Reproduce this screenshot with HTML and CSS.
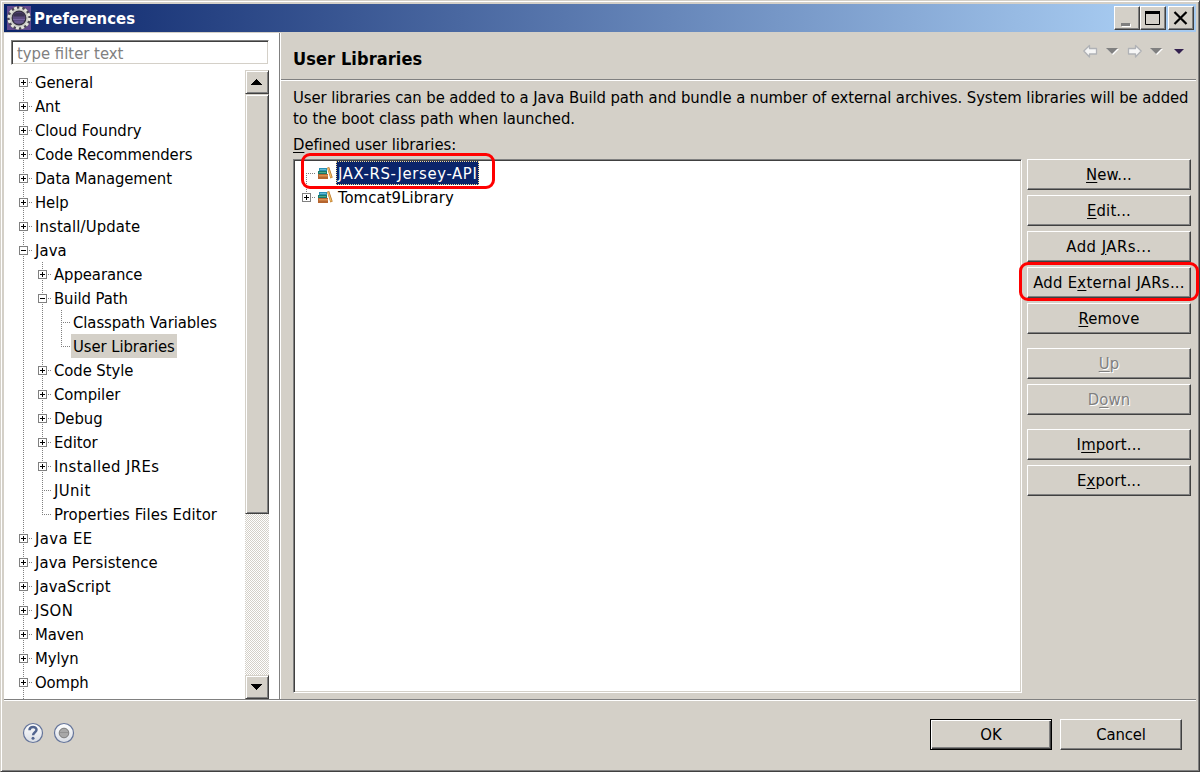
FILE: index.html
```html
<!DOCTYPE html>
<html lang="en">
<head>
<meta charset="utf-8">
<title>Preferences</title>
<link rel="stylesheet" href="styles.css">
</head>
<body>
<svg width="0" height="0" class="defs">
  <symbol id="books" viewBox="0 0 16 16">
    <path d="M2 3h8v3H2z" fill="#2a8fb5"/><path d="M3 4h6v1H3z" fill="#62bcd2"/>
    <path d="M1 6h9v3H1z" fill="#17796a"/><path d="M2 7h7v1H2z" fill="#4fa88a"/>
    <path d="M1 9h10v5H1z" fill="#b5652f"/><path d="M2 10h9v1.500H2z" fill="#dc9350"/>
    <path d="M10 2.700l2.200-.8 3.500 10.600-2.300.9z" fill="#b9772c"/><path d="M11 3l3.300 9.500" stroke="#f0bd65" stroke-width="1.200" fill="none"/>
  </symbol>
</svg>
<div class="window">
  <header class="titlebar">
    <svg class="app" width="24" height="24" viewBox="0 0 24 24">
      <rect width="24" height="24" fill="#62498f"/>
      <circle cx="12" cy="12" r="10" fill="none" stroke="#4a4655" stroke-width="3.5"/>
      <circle cx="12" cy="12" r="8.2" fill="#4a3b6c" stroke="#c9c9c4" stroke-width="2.600"/>
      <circle cx="12" cy="12" r="10.2" fill="none" stroke="#e4e4dc" stroke-width="2.8" stroke-dasharray="3 2.34"/>
      <circle cx="12" cy="12" r="6.8" fill="#5b4a80" stroke="#343040" stroke-width="1.200"/>
      <path d="M6.500 8.500q5.500-4 11 0v2h-11z" fill="#3b3252"/><path d="M6 13.500h12M7.500 16h9" stroke="#7564a0"/>
    </svg>
    <h1>Preferences</h1>
    <div class="winbtns">
      <span class="raised wb"><svg width="20" height="20"><path d="M5 16h9v3H5z" fill="#fff"/><path d="M4 15h9v3H4z" fill="#808080"/></svg></span>
      <span class="raised wb"><svg width="20" height="20"><path d="M3 4h14v13H3z" fill="none" stroke="#000" stroke-width="1" transform="translate(-.5 -.5)"/><path d="M2 3h15v3H2z"/></svg></span>
      <span class="raised wb close"><svg width="20" height="20"><path d="M3.500 4l12 12M15.500 4l-12 12" stroke="#000" stroke-width="2.2"/></svg></span>
    </div>
  </header>
  <main class="body">
    <nav class="side">
      <div class="filter">type filter text</div>
      <div class="treewrap">
        <ul class="tree">
          <li><i class="g first"><b class="plus"></b></i><span>General</span></li>
          <li><i class="g"><b class="plus"></b></i><span>Ant</span></li>
          <li><i class="g"><b class="plus"></b></i><span>Cloud Foundry</span></li>
          <li><i class="g"><b class="plus"></b></i><span>Code Recommenders</span></li>
          <li><i class="g"><b class="plus"></b></i><span>Data Management</span></li>
          <li><i class="g"><b class="plus"></b></i><span>Help</span></li>
          <li><i class="g"><b class="plus"></b></i><span class="wide">Install/Update</span></li>
          <li><i class="g"><b></b></i><span class="wide">Java</span></li>
          <li><i class="g v"></i><i class="g"><b class="plus"></b></i><span>Appearance</span></li>
          <li><i class="g v"></i><i class="g"><b></b></i><span>Build Path</span></li>
          <li><i class="g v"></i><i class="g v"></i><i class="g"></i><span>Classpath Variables</span></li>
          <li><i class="g v"></i><i class="g v"></i><i class="g last"></i><span class="sel">User Libraries</span></li>
          <li><i class="g v"></i><i class="g"><b class="plus"></b></i><span>Code Style</span></li>
          <li><i class="g v"></i><i class="g"><b class="plus"></b></i><span>Compiler</span></li>
          <li><i class="g v"></i><i class="g"><b class="plus"></b></i><span>Debug</span></li>
          <li><i class="g v"></i><i class="g"><b class="plus"></b></i><span>Editor</span></li>
          <li><i class="g v"></i><i class="g"><b class="plus"></b></i><span class="wider">Installed JREs</span></li>
          <li><i class="g v"></i><i class="g"></i><span class="wider">JUnit</span></li>
          <li><i class="g v"></i><i class="g last"></i><span class="prop">Properties Files Editor</span></li>
          <li><i class="g"><b class="plus"></b></i><span class="wider">Java EE</span></li>
          <li><i class="g"><b class="plus"></b></i><span class="wide">Java Persistence</span></li>
          <li><i class="g"><b class="plus"></b></i><span class="wide">JavaScript</span></li>
          <li><i class="g"><b class="plus"></b></i><span class="wider">JSON</span></li>
          <li><i class="g"><b class="plus"></b></i><span>Maven</span></li>
          <li><i class="g"><b class="plus"></b></i><span>Mylyn</span></li>
          <li><i class="g"><b class="plus"></b></i><span>Oomph</span></li>
          <li><i class="g v"></i></li>
        </ul>
        <div class="scroll">
          <span class="raised sb"><svg width="11" height="6"><path d="M5 0h1v1h1v1h1v1h1v1h1v1h1v1H0V5h1V4h1V3h1V2h1V1h1z"/></svg></span>
          <span class="raised thumb"></span>
          <span class="track"></span>
          <span class="raised sb"><svg width="11" height="6"><path d="M0 0h11v1h-1v1H9v1H8v1H7v1H6v1H5V5H4V4H3V3H2V2H1V1H0z"/></svg></span>
        </div>
      </div>
    </nav>
    <section class="page">
      <div class="head">
        <h2>User Libraries</h2>
        <svg width="104" height="16" class="nav">
          <path d="M.8 8l5.700-5.500v3h7v5.500h-7v3z" fill="#f6f6f6" stroke="#b0b2b6" stroke-width="1.300" stroke-linejoin="round"/>
          <path d="M24 6h12l-6 6z" fill="#fff"/><path d="M23 5h12l-6 6z" fill="#808080"/>
          <path d="M58.200 8l-5.700-5.500v3h-7v5.500h7v3z" fill="#f6f6f6" stroke="#b0b2b6" stroke-width="1.300" stroke-linejoin="round"/>
          <path d="M68 6h12l-6 6z" fill="#fff"/><path d="M67 5h12l-6 6z" fill="#808080"/>
          <path d="M91 6h10l-5 5z" fill="#33204f"/>
        </svg>
      </div>
      <div class="content">
        <p>User libraries can be added to a Java Build path and bundle a number of external archives. System libraries will be added<br>to the boot class path when launched.</p>
        <div class="lbl"><u>D</u>efined user libraries:</div>
        <div class="cols">
          <div class="list">
            <ul class="tree">
              <li><i class="g first"></i><svg class="bk" width="16" height="16"><use href="#books"/></svg><span class="active">JAX-RS-Jersey-API</span></li>
              <li><i class="g last"><b class="plus"></b></i><svg class="bk" width="16" height="16"><use href="#books"/></svg><span class="wide">Tomcat9Library</span></li>
            </ul>
            <div class="mark m1"></div>
          </div>
          <div class="btns">
            <button><u>N</u>ew...</button>
            <button><u>E</u>dit...</button>
            <button class="jar">Add <u>J</u>ARs...</button>
            <div class="marked"><button class="ext">Add E<u>x</u>ternal JARs...</button><div class="mark m2"></div></div>
            <button><u>R</u>emove</button>
            <button class="off sp"><u>U</u>p</button>
            <button class="off">D<u>o</u>wn</button>
            <button class="sp">I<u>m</u>port...</button>
            <button>E<u>x</u>port...</button>
          </div>
        </div>
      </div>
    </section>
  </main>
  <footer>
    <svg width="54" height="24" class="tools">
      <defs><linearGradient id="sh" x2="0" y2="1"><stop offset="0" stop-color="#fff"/><stop offset="1" stop-color="#d9dde4"/></linearGradient></defs>
      <circle cx="11" cy="12" r="9.500" fill="url(#sh)" stroke="#64749a" stroke-width="1.200"/>
      <path d="M7.500 9.300c0-4.500 7.200-4.300 7-.3-.1 2.200-3.400 2.300-3.400 5.200" fill="none" stroke="#52658f" stroke-width="2.500"/><circle cx="11" cy="17.300" r="1.500" fill="#52658f"/>
      <circle cx="42" cy="12" r="9.500" fill="url(#sh)" stroke="#64749a" stroke-width="1.200"/>
      <circle cx="42" cy="12" r="4.800" fill="#a8a8a8" stroke="#7c7c7c"/><path d="M38 11.500h8" stroke="#929292"/>
    </svg>
    <div class="actions"><button class="ok">OK</button><button class="cancel">Cancel</button></div>
  </footer>
</div>
</body>
</html>
```
FILE: styles.css
```css
* { box-sizing: border-box; }
body { margin: 0; background: #d4d0c8; font: 16.5px/24px "DejaVu Sans Condensed", "DejaVu Sans", sans-serif; font-stretch: condensed; color: #000; letter-spacing: -0.07px; overflow: hidden; }
.defs { position: absolute; }
ul, p, h1, h2 { margin: 0; padding: 0; }
u { text-decoration-thickness: 1px; text-underline-offset: 2px; }
.window { width: 1200px; height: 772px; display: flex; flex-direction: column; padding: 3px; border: 1px solid; border-color: #d4d0c8 #404040 #404040 #d4d0c8; box-shadow: inset 1px 1px #fff, inset -1px -1px #808080; }
.titlebar { height: 28px; width: 1192px; flex: none; display: flex; align-items: center; padding: 0 2px 0 3px; background: linear-gradient(90deg, #0a246a, #a6caf0 94%); }
.titlebar h1 { font-size: 16.5px; font-weight: bold; color: #fff; margin-left: 3px; padding-top: 1px; flex: 1; letter-spacing: 0.05px; }
.winbtns { display: flex; }
.raised { background: #d4d0c8; border: 1px solid; border-color: #fff #404040 #404040 #fff; box-shadow: inset -1px -1px #808080; }
.wb { width: 26px; height: 24px; padding: 1px 2px; }
.wb svg { display: block; }
.close { margin-left: 2px; }
.body { height: 666px; margin-top: 1px; flex: none; display: flex; width: 1192px; }
.side { width: 277px; background: #fff; border-right: 1px solid #fff; box-shadow: inset -1px 0 #808080; padding: 7px 0 0 7px; }
.filter { width: 258px; height: 25px; border: 1px solid; border-color: #808080 #fff #fff #808080; box-shadow: inset 1px 1px #404040, inset -1px -1px #d4d0c8; color: #808080; padding-left: 5px; line-height: 25px; letter-spacing: 0; }
.treewrap { display: flex; height: 629px; margin-top: 5px; overflow: hidden; }
.tree { list-style: none; }
.side .tree { width: 234px; padding-left: 3px; }
.tree li { display: flex; height: 24px; }
.tree span { padding: 0 2px; white-space: nowrap; line-height: 25px; height: 24px; }
.tree .wide { letter-spacing: 0.12px; }
.tree .wider { letter-spacing: 0.4px; }
.tree .prop { letter-spacing: 0.1px; }
.g { width: 19px; height: 24px; flex: none; display: flex; align-items: center; padding: 1px 0 0 5px; background: repeating-linear-gradient(#808080 0 1px, transparent 1px 2px) 9px 0/1px 100% no-repeat, repeating-linear-gradient(90deg, #808080 0 1px, transparent 1px 2px) 9px 12px/9px 1px no-repeat; }
.g.v { background-size: 1px 100%, 0 0; }
.g.last { background-size: 1px 13px, 9px 1px; }
.g.first { background-position: 9px 12px, 9px 12px; }
.g b { width: 9px; height: 9px; border: 1px solid #808080; background: linear-gradient(#000, #000) 1px 3px/5px 1px no-repeat, #fff; }
.g b.plus { background: linear-gradient(#000, #000) 1px 3px/5px 1px no-repeat, linear-gradient(#000, #000) 3px 1px/1px 5px no-repeat, #fff; }
.sel { background: #d4d0c8; }
.scroll { width: 24px; display: flex; flex-direction: column; }
.sb { height: 24px; display: flex; align-items: center; justify-content: center; padding-right: 1px; }
.scroll .raised { border-color: #d4d0c8 #404040 #404040 #d4d0c8; box-shadow: inset 1px 1px #fff, inset -1px -1px #808080; }
.thumb { height: 420px; }
.track { flex: 1; background: repeating-conic-gradient(#d4d0c8 0 25%, #fff 0 50%) 0 0/2px 2px; }
.page { flex: 1; }
.head { height: 48px; border-bottom: 1px solid #fff; box-shadow: inset 0 -1px #808080; display: flex; justify-content: space-between; padding-left: 12px; }
.head h2 { font-size: 18px; line-height: 52px; letter-spacing: 0.1px; }
.nav { margin: 10px 9px 0 0; }
.content { padding: 6px 5px 0 12px; }
.content p { line-height: 21px; white-space: nowrap; }
.lbl { line-height: 31px; height: 30px; }
.cols { display: flex; gap: 5px; }
.list { width: 729px; height: 534px; background: #fff; border: 1px solid; border-color: #808080 #fff #fff #808080; box-shadow: inset 1px 1px #404040, inset -1px -1px #d4d0c8; padding: 1px 0 0 3px; position: relative; }
.bk { margin: 4px 3px 0 1px; }
.active { background: #0a246a; color: #fff; outline: 1px dotted #f5db95; outline-offset: -1px; letter-spacing: 0.65px; }
.btns { display: flex; flex-direction: column; gap: 5px; width: 164px; }
button { font: inherit; letter-spacing: 0.15px; color: #000; width: 164px; height: 31px; padding: 0; display: block; white-space: nowrap; border: 1px solid; border-color: #fff #404040 #404040 #fff; box-shadow: inset -1px -1px #808080; background: #d4d0c8; line-height: 28px; }
.jar { letter-spacing: 0.5px; }
.ext { letter-spacing: 0.28px; }
.sp { margin-top: 9px; }
.off { color: #808080; text-shadow: 1px 1px #fff; }
.marked { position: relative; }
.mark { position: absolute; border: 3px solid #f00; border-radius: 9px; }
.m1 { left: 7px; top: -7px; width: 194px; height: 36px; }
.m2 { left: -8px; top: -5px; width: 180px; height: 39px; }
footer { height: 72px; flex: none; width: 1192px; border-top: 1px solid #808080; box-shadow: inset 0 1px #fff; display: flex; justify-content: space-between; padding: 19px 14px 0 18px; }
.tools { margin-top: 2px; }
.actions { display: flex; gap: 8px; }
.actions button { width: 122px; }
.actions .cancel { letter-spacing: -0.15px; }
.actions .ok { border-color: #000; box-shadow: inset 1px 1px #fff, inset -1px -1px #404040, inset -2px -2px #808080; }
```
